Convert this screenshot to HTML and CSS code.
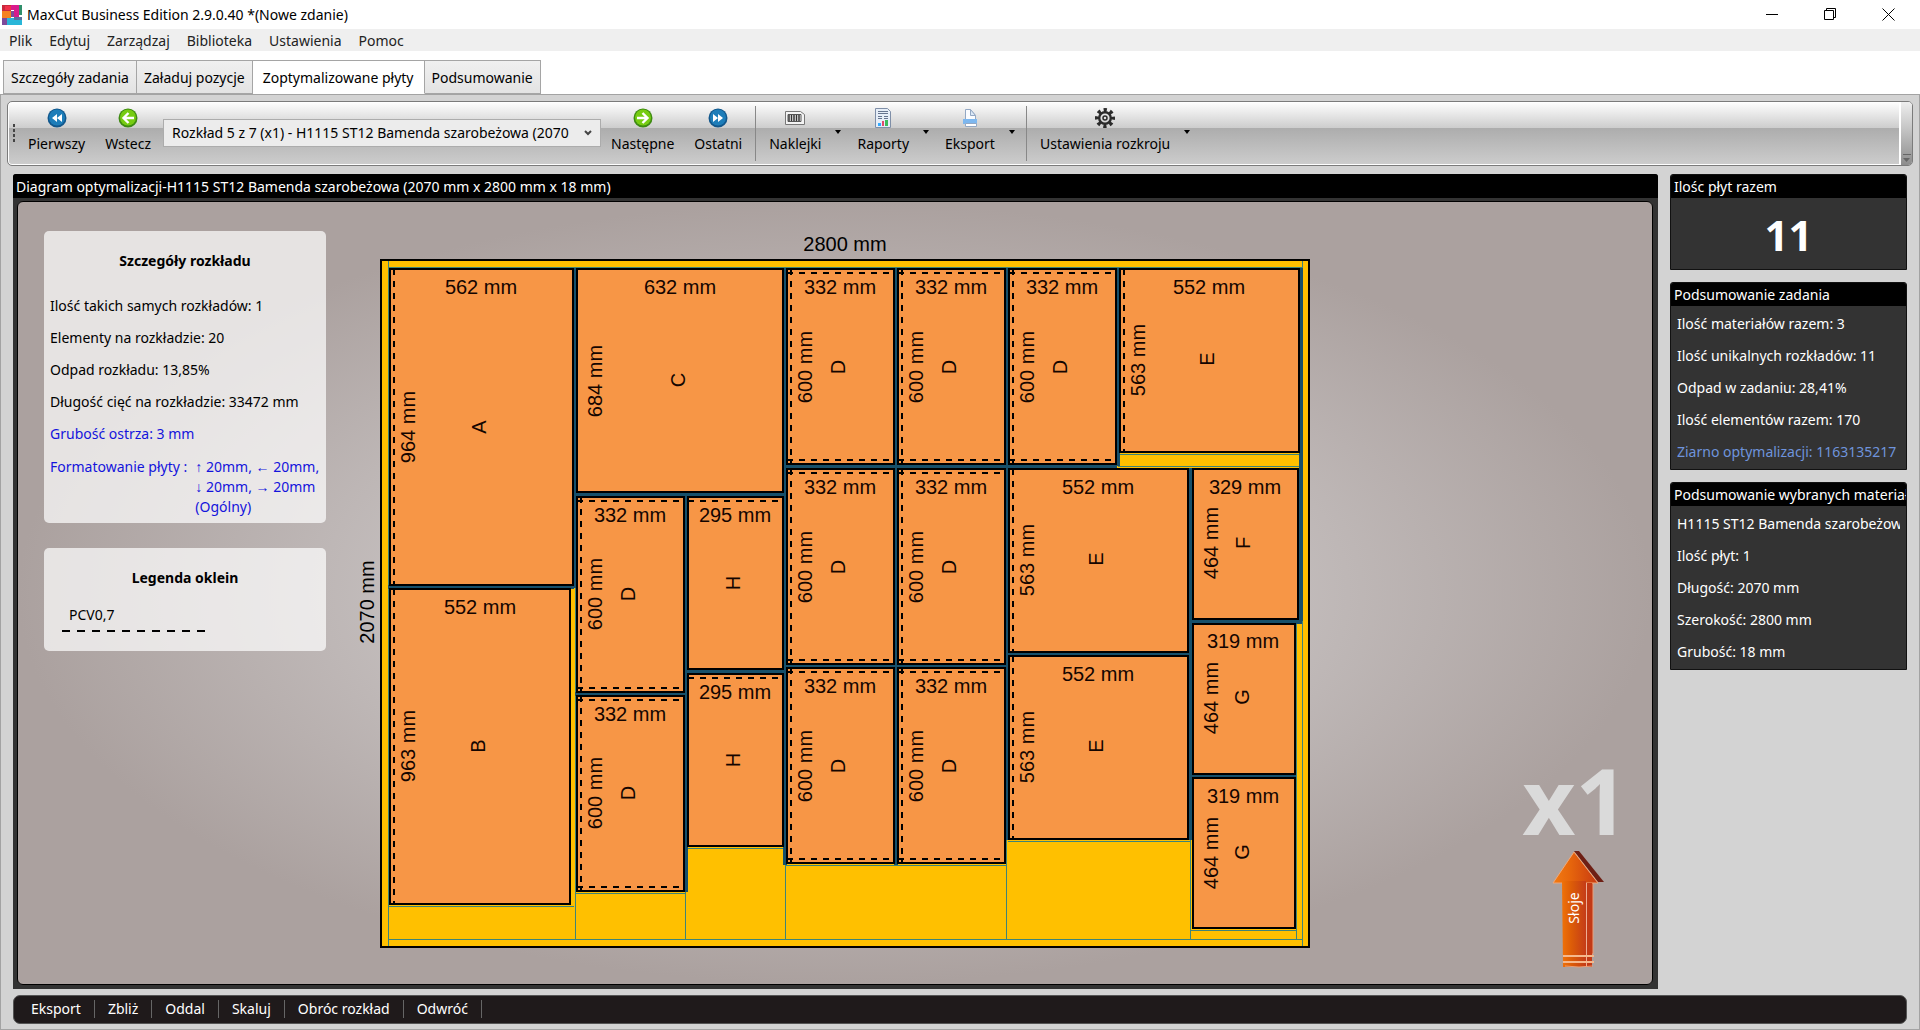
FILE: index.html
```html
<!DOCTYPE html>
<html lang="pl">
<head>
<meta charset="utf-8">
<title>MaxCut Business Edition 2.9.0.40 *(Nowe zdanie)</title>
<link rel="stylesheet" href="styles.css">
</head>
<body>
<header class="titlebar">
  <svg class="app-logo" viewBox="0 0 20 20" aria-hidden="true">
    <path fill="#c8283c" d="M0 0h9v6H0z"/><path fill="#f0304a" d="M3 1h6v4H3z"/><path fill="#d81b8c" d="M9 0h8v12h-5V5H9z"/>
    <path fill="#2f8f6b" d="M17 0h3v10h-3z"/><path fill="#f58220" d="M0 6h9v7H5v7H0z"/><path fill="#7d4a9a" d="M9 6h3v6H9zM0 13h5v7H0z"/>
    <path fill="#5b6f9e" d="M12 12h8v3h-8z"/><path fill="#29b6d8" d="M5 13h7v2h8v5H5z"/>
  </svg>
  <h1 class="title">MaxCut Business Edition 2.9.0.40 *(Nowe zdanie)</h1>
  <div class="window-buttons">
    <button type="button" aria-label="Minimalizuj"><svg viewBox="0 0 13 13"><path d="M0 6.500h12"/></svg></button>
    <button type="button" aria-label="Przywróć"><svg viewBox="0 0 13 13"><path d="M.5 2.500h9v9h-9zM2.500 2.500v-2h9v9h-2"/></svg></button>
    <button type="button" aria-label="Zamknij"><svg viewBox="0 0 13 13"><path d="M.5.5l12 12M12.500.5l-12 12"/></svg></button>
  </div>
</header>
<nav class="menu">
  <button type="button">Plik</button><button type="button">Edytuj</button><button type="button">Zarządzaj</button><button type="button">Biblioteka</button><button type="button">Ustawienia</button><button type="button">Pomoc</button>
</nav>
<nav class="tabs">
  <button type="button">Szczegóły zadania</button><button type="button">Załaduj pozycje</button><button type="button" class="active">Zoptymalizowane płyty</button><button type="button">Podsumowanie</button>
</nav>
<main class="page">
  <div class="toolbar">
    <span class="grip"></span>
    <button type="button" class="tool">
      <svg viewBox="0 0 20 20"><circle cx="10" cy="10" r="9.500" fill="#12578c"/><circle cx="10" cy="9.500" r="8" fill="#1d7db9"/><path fill="#fff" d="M10 6v8l-5-4zM15 6v8l-5-4z"/></svg>
      <span>Pierwszy</span></button>
    <button type="button" class="tool">
      <svg viewBox="0 0 20 20"><circle cx="10" cy="10" r="9.500" fill="#3d8a12"/><circle cx="10" cy="9.500" r="8" fill="#76cc12"/><path fill="none" stroke="#fff" stroke-width="2.400" d="M16 10H6M10.500 5L5.500 10l5 5"/></svg>
      <span>Wstecz</span></button>
    <select class="layout-select" aria-label="Rozkład"><option>Rozkład 5 z 7 (x1) - H1115 ST12 Bamenda szarobeżowa (2070 mm x 2800 mm x 18 mm)</option></select>
    <button type="button" class="tool">
      <svg viewBox="0 0 20 20"><circle cx="10" cy="10" r="9.500" fill="#3d8a12"/><circle cx="10" cy="9.500" r="8" fill="#76cc12"/><path fill="none" stroke="#fff" stroke-width="2.400" d="M4 10h10M9.500 5l5 5-5 5"/></svg>
      <span>Następne</span></button>
    <button type="button" class="tool">
      <svg viewBox="0 0 20 20"><circle cx="10" cy="10" r="9.500" fill="#12578c"/><circle cx="10" cy="9.500" r="8" fill="#1d7db9"/><path fill="#fff" d="M10 6v8l5-4zM5 6v8l5-4z"/></svg>
      <span>Ostatni</span></button>
    <span class="divider"></span>
    <button type="button" class="tool drop">
      <svg viewBox="0 0 20 20"><path fill="#f4f4f4" stroke="#777" d="M.5 3.500h15l4 3v10H.5z"/><path stroke="#333" stroke-width="1.500" d="M4 6v8M6.500 6v8M9 6v8M11.500 6v8M14 6v8"/><path stroke="#555" d="M3 6.500h13v7H3z" fill="none"/></svg>
      <span>Naklejki</span></button>
    <button type="button" class="tool drop">
      <svg viewBox="0 0 20 20"><path fill="#e6eef8" stroke="#7f8fa8" d="M2.500.5h12l3 3v16h-15z"/><path fill="none" stroke="#66758f" d="M5 3.500h10M5 5.500h10M5 8.500h4M5 10.500h4M11 8.500h4M11 10.500h4"/><path fill="#32aaff" d="M5 15h3v3H5z"/><path fill="#e24a6c" d="M9 13h2v5H9z"/><path fill="#3dbb5c" d="M12 12h3v6h-3z"/></svg>
      <span>Raporty</span></button>
    <button type="button" class="tool drop">
      <svg viewBox="0 0 20 20"><path fill="#fafcff" stroke="#93a8c4" d="M5.500 12V1.500h5l5 6V12"/><path fill="#dbe8f6" stroke="#93a8c4" d="M10.500 1.500v6h5z"/><path fill="#7db7ef" d="M3 11h14v5H3z"/><path fill="#fff" stroke="#93a8c4" d="M5.500 15.500h11v3h-11z"/></svg>
      <span>Eksport</span></button>
    <span class="divider"></span>
    <button type="button" class="tool drop">
      <svg viewBox="0 0 20 20"><circle cx="10" cy="10" r="8" fill="none" stroke="#2b2b2b" stroke-width="4" stroke-dasharray="3.140 3.140" stroke-dashoffset="1.570"/><circle cx="10" cy="10" r="5.800" fill="none" stroke="#2b2b2b" stroke-width="2.400"/><circle cx="10" cy="10" r="2" fill="none" stroke="#2b2b2b" stroke-width="1.500"/></svg>
      <span>Ustawienia rozkroju</span></button>
    <button type="button" class="overflow" aria-label="Więcej"><svg viewBox="0 0 8 8"><path stroke="#666" d="M0 .5h8"/><path fill="#666" d="M0 4h7L3.500 8z"/></svg></button>
  </div>

  <div class="workspace">
    <section class="diagram-panel">
      <h2 class="panel-head">Diagram optymalizacji-H1115 ST12 Bamenda szarobeżowa (2070 mm x 2800 mm x 18 mm)</h2>
      <div class="canvas">
        <div class="cards">
          <section class="card details">
            <h3>Szczegóły rozkładu</h3>
            <p>Ilość takich samych rozkładów: 1</p>
            <p>Elementy na rozkładzie: 20</p>
            <p>Odpad rozkładu: 13,85%</p>
            <p>Długość cięć na rozkładzie: 33472 mm</p>
            <p class="blue">Grubość ostrza: 3 mm</p>
            <p class="blue trim"><span>Formatowanie płyty :</span><span>↑ 20mm, ← 20mm,<br>↓ 20mm, → 20mm<br>(Ogólny)</span></p>
          </section>
          <section class="card legend">
            <h3>Legenda oklein</h3>
            <p>PCV0,7</p>
            <svg class="legend-line" viewBox="0 0 145 2"><path d="M0 1h145"/></svg>
          </section>
        </div>

        <svg class="board" viewBox="0 0 962 720" role="img" aria-label="Rozkład płyty 2800 x 2070 mm">
          <text x="495" y="21">2800 mm</text>
          <text transform="translate(24 372) rotate(-90)">2070 mm</text>
          <rect class="sheet" x="31" y="30" width="928" height="687"/>
          <path class="cut" d="M38.500 31v685M952.500 31v685M38 37.500h914M38 709.500h914M225.500 37v672M335.500 264v445M435.500 37v672M656.500 37v672M840.500 238v471M946.500 391v318M38 676.500h186M225 663.500h110M336 618.500h99M436 635.500h220M658 611.500h182M768 224.500h184M768 236.500h184M841 700.500h106"/>
          <path class="kerf" d="M225 38v320M336 265v397M435 38v597M546 38v597M657 38v572M768 38v198M841 238v372M951 38v353M38 357h186M225 264h210M225 464h110M336 442h99M436 236h331M436 436h220M658 424h182M841 392h111M841 546h105"/>

          <g class="part"><rect x="40" y="39" width="183" height="316"/><path d="M44 39v316"/><text x="131" y="64">562 mm</text><text transform="translate(65 197) rotate(-90)">964 mm</text><text transform="translate(136 197) rotate(-90)">A</text></g>
          <g class="part"><rect x="40" y="359" width="180" height="315"/><path d="M44 359v315"/><text x="130" y="384">552 mm</text><text transform="translate(65 516) rotate(-90)">963 mm</text><text transform="translate(135 516) rotate(-90)">B</text></g>
          <g class="part"><rect x="227" y="39" width="206" height="223"/><text x="330" y="64">632 mm</text><text transform="translate(252 151) rotate(-90)">684 mm</text><text transform="translate(335 150) rotate(-90)">C</text></g>

          <g class="part"><rect x="227" y="267" width="107" height="195"/><path d="M231 267v195M227 271h107M227 458h107"/><text x="280" y="292">332 mm</text><text transform="translate(252 364) rotate(-90)">600 mm</text><text transform="translate(285 364) rotate(-90)">D</text></g>
          <g class="part"><rect x="227" y="466" width="107" height="195"/><path d="M231 466v195M227 470h107M227 657h107"/><text x="280" y="491">332 mm</text><text transform="translate(252 563) rotate(-90)">600 mm</text><text transform="translate(285 563) rotate(-90)">D</text></g>
          <g class="part"><rect x="338" y="267" width="95" height="172"/><path d="M338 271h95"/><text x="385" y="292">295 mm</text><text transform="translate(390 353) rotate(-90)">H</text></g>
          <g class="part"><rect x="338" y="444" width="95" height="172"/><path d="M338 448h95"/><text x="385" y="469">295 mm</text><text transform="translate(390 530) rotate(-90)">H</text></g>

          <g class="part"><rect x="437" y="39" width="107" height="195"/><path d="M441 39v195M437 43h107M437 230h107"/><text x="490" y="64">332 mm</text><text transform="translate(462 137) rotate(-90)">600 mm</text><text transform="translate(495 137) rotate(-90)">D</text></g>
          <g class="part"><rect x="437" y="239" width="107" height="195"/><path d="M441 239v195M437 243h107M437 430h107"/><text x="490" y="264">332 mm</text><text transform="translate(462 337) rotate(-90)">600 mm</text><text transform="translate(495 337) rotate(-90)">D</text></g>
          <g class="part"><rect x="437" y="438" width="107" height="195"/><path d="M441 438v195M437 442h107M437 629h107"/><text x="490" y="463">332 mm</text><text transform="translate(462 536) rotate(-90)">600 mm</text><text transform="translate(495 536) rotate(-90)">D</text></g>

          <g class="part"><rect x="548" y="39" width="107" height="195"/><path d="M552 39v195M548 43h107M548 230h107"/><text x="601" y="64">332 mm</text><text transform="translate(573 137) rotate(-90)">600 mm</text><text transform="translate(606 137) rotate(-90)">D</text></g>
          <g class="part"><rect x="548" y="239" width="107" height="195"/><path d="M552 239v195M548 243h107M548 430h107"/><text x="601" y="264">332 mm</text><text transform="translate(573 337) rotate(-90)">600 mm</text><text transform="translate(606 337) rotate(-90)">D</text></g>
          <g class="part"><rect x="548" y="438" width="107" height="195"/><path d="M552 438v195M548 442h107M548 629h107"/><text x="601" y="463">332 mm</text><text transform="translate(573 536) rotate(-90)">600 mm</text><text transform="translate(606 536) rotate(-90)">D</text></g>

          <g class="part"><rect x="659" y="39" width="107" height="195"/><path d="M663 39v195M659 43h107M659 230h107"/><text x="712" y="64">332 mm</text><text transform="translate(684 137) rotate(-90)">600 mm</text><text transform="translate(717 137) rotate(-90)">D</text></g>
          <g class="part"><rect x="659" y="239" width="179" height="183"/><path d="M663 239v183"/><text x="748" y="264">552 mm</text><text transform="translate(684 330) rotate(-90)">563 mm</text><text transform="translate(753 329) rotate(-90)">E</text></g>
          <g class="part"><rect x="659" y="426" width="179" height="183"/><path d="M663 426v183"/><text x="748" y="451">552 mm</text><text transform="translate(684 517) rotate(-90)">563 mm</text><text transform="translate(753 516) rotate(-90)">E</text></g>
          <g class="part"><rect x="770" y="39" width="179" height="183"/><path d="M774 39v183"/><text x="859" y="64">552 mm</text><text transform="translate(795 130) rotate(-90)">563 mm</text><text transform="translate(864 129) rotate(-90)">E</text></g>

          <g class="part"><rect x="843" y="239" width="105" height="150"/><text x="895" y="264">329 mm</text><text transform="translate(868 313) rotate(-90)">464 mm</text><text transform="translate(900 313) rotate(-90)">F</text></g>
          <g class="part"><rect x="843" y="394" width="102" height="150"/><text x="893" y="418">319 mm</text><text transform="translate(868 468) rotate(-90)">464 mm</text><text transform="translate(899 467) rotate(-90)">G</text></g>
          <g class="part"><rect x="843" y="548" width="102" height="150"/><text x="893" y="573">319 mm</text><text transform="translate(868 623) rotate(-90)">464 mm</text><text transform="translate(899 622) rotate(-90)">G</text></g>
        </svg>

        <div class="stamp">
          <strong>x1</strong>
          <svg class="grain" viewBox="0 0 52 118">
            <defs>
              <linearGradient id="front"><stop offset="0" stop-color="#f27a12"/><stop offset=".35" stop-color="#e8680c"/><stop offset="1" stop-color="#c83a12"/></linearGradient>
              <linearGradient id="shaft"><stop offset="0" stop-color="#f07208"/><stop offset=".4" stop-color="#dc5c08"/><stop offset="1" stop-color="#c43c18"/></linearGradient>
            </defs>
            <path fill="#6e1f14" d="M22 1h5l25 31h-6z"/>
            <path fill="#c23a16" stroke="#e9a07c" d="M34 32h7v72h-7z"/>
            <path fill="url(#front)" stroke="#f0a878" d="M22 2l24 31H1z"/>
            <path fill="url(#shaft)" d="M10 31h24v86H11z"/>
            <path fill="#c23a16" d="M35 33h5v84h-6z"/>
            <path fill="none" stroke="#eeae94" d="M34.500 33v84"/>
            <path fill="none" stroke="#f6b88c" stroke-width="2" d="M11 106h31M11 112h31"/>
            <path fill="none" stroke="#e8a07a" d="M13 116q14 2 28 0"/>
            <text transform="translate(27 58) rotate(-90)">Słoje</text>
          </svg>
        </div>
      </div>
    </section>

    <aside class="summary">
      <section class="box total">
        <h2 class="panel-head">Ilośc płyt razem</h2>
        <div class="box-body"><strong>11</strong></div>
      </section>
      <section class="box">
        <h2 class="panel-head">Podsumowanie zadania</h2>
        <div class="box-body">
          <p>Ilość materiałów razem: 3</p>
          <p>Ilość unikalnych rozkładów: 11</p>
          <p>Odpad w zadaniu: 28,41%</p>
          <p>Ilość elementów razem: 170</p>
          <p class="seed">Ziarno optymalizacji: 1163135217</p>
        </div>
      </section>
      <section class="box">
        <h2 class="panel-head">Podsumowanie wybranych materiałów</h2>
        <div class="box-body">
          <p>H1115 ST12 Bamenda szarobeżowa</p>
          <p>Ilość płyt: 1</p>
          <p>Długość: 2070 mm</p>
          <p>Szerokość: 2800 mm</p>
          <p>Grubość: 18 mm</p>
        </div>
      </section>
    </aside>
  </div>

  <footer class="actions">
    <button type="button">Eksport</button><button type="button">Zbliż</button><button type="button">Oddal</button><button type="button">Skaluj</button><button type="button">Obróc rozkład</button><button type="button">Odwróć</button>
  </footer>
</main>
</body>
</html>
```
FILE: styles.css
```css
* { box-sizing: border-box; }

body {
  margin: 0;
  min-height: 100vh;
  display: flex;
  flex-direction: column;
  background: #fff;
  color: #000;
  font: 14px/20px "Noto Sans", "Open Sans", sans-serif;
}

h1, h2, h3, p { margin: 0; font-size: inherit; font-weight: 400; }
button, select { font: inherit; color: inherit; background: none; border: 0; padding: 0; margin: 0; white-space: nowrap; }

/* window frame */
.titlebar { display: flex; align-items: center; height: 29px; padding-left: 2px; }
.app-logo { width: 20px; height: 20px; margin-right: 5px; }
.window-buttons { display: flex; margin-left: auto; padding-right: 3px; }
.window-buttons button { display: flex; justify-content: center; width: 58px; }
.window-buttons svg { width: 13px; height: 13px; fill: none; stroke: #000; }

.menu { display: flex; gap: 17px; padding: 1px 9px 0; height: 22px; background: #efefef; color: #222; }

.tabs { display: flex; align-items: flex-end; height: 43px; padding-left: 3px; }
.tabs button { height: 34px; padding: 1px 7px 0; border: 1px solid #a5a5a5; border-left-width: 0; background: linear-gradient(#f0f0f0, #e3e3e3); }
.tabs button:first-child { border-left-width: 1px; }
.tabs .active { padding: 1px 10px 0; background: #fff; border-bottom-color: #fff; }

.page { flex: 1; display: flex; flex-direction: column; padding: 6px 12px 5px; background: #d3d3d3; border: 1px solid #a3a3a3; }

/* toolbar */
.toolbar {
  display: flex;
  align-items: stretch;
  height: 65px;
  margin: 0 -6px 8px;
  border: 1px solid #7b7b7b;
  border-radius: 5px;
  background: linear-gradient(#fff, #ccc 42%, #adadad 42%, #cdcdcd);
  box-shadow: inset 0 0 0 1px #fff;
  overflow: hidden;
}
.grip { width: 2px; height: 18px; margin: 22px 6px 0 5px; background: repeating-linear-gradient(#444 0 3px, transparent 3px 5px); }
.tool { display: flex; flex-direction: column; align-items: center; gap: 6px; padding: 6px 10px 0; }
.tool:first-of-type { padding-left: 7px; }
.tool svg { width: 20px; height: 20px; }
.drop { position: relative; padding: 6px 28px 0 8px; }
.drop::after { content: ""; position: absolute; right: 8px; top: 28px; border: 3px solid transparent; border-top: 4px solid #000; border-bottom: 0; }
.divider { width: 1px; margin: 4px 5px 4px 3px; background: #888; }
.layout-select {
  appearance: none;
  flex: 0 1 438px;
  min-width: 0;
  width: 438px;
  height: 28px;
  margin: 17px 0 0 2px;
  padding: 0 29px 0 8px;
  border: 1px solid #acacac;
  background: #ececec url("data:image/svg+xml,%3Csvg xmlns='http://www.w3.org/2000/svg' width='8' height='6'%3E%3Cpath d='M1 1l3 3 3-3' fill='none' stroke='%23444' stroke-width='2'/%3E%3C/svg%3E") no-repeat right 8px center;
}
.overflow { display: flex; align-items: flex-end; justify-content: center; width: 13px; margin-left: auto; padding-bottom: 3px; border-left: 2px solid #fff; background: linear-gradient(#eee, #8d8d8d); }
.overflow svg { width: 8px; height: 8px; }

/* workspace */
.workspace { flex: 1; display: flex; gap: 12px; }
.panel-head {
  height: 24px;
  padding: 0 3px;
  line-height: 25px;
  background: #000;
  color: #fff;
  border-radius: 3px 3px 0 0;
  overflow: hidden;
  white-space: nowrap;
}
.diagram-panel { flex: 1; min-width: 0; display: flex; flex-direction: column; padding: 0 5px 4px 4px; background: #333; border-radius: 3px 3px 0 0; }
.diagram-panel .panel-head { margin: 0 -5px 3px -4px; }
.canvas {
  flex: 1;
  display: flex;
  align-items: flex-start;
  gap: 24px;
  padding: 28px 24px 0 26px;
  border: 1px solid #000;
  border-radius: 6px;
  background: radial-gradient(closest-side, #dedcdd, #aba19f) #aba19f;
}
.cards { flex: 0 0 282px; min-width: 0; display: flex; flex-direction: column; gap: 25px; padding-top: 1px; }
.card { background: rgba(255, 255, 255, .7); border-radius: 5px; padding: 20px 6px 0; }
.card h3 { font-weight: 700; text-align: center; }
.details { height: 292px; }
.details h3 { margin-bottom: 25px; }
.details p { margin-bottom: 12px; white-space: nowrap; }
.details .blue { margin-bottom: 13px; }
.blue { color: #1414dc; }
.trim { display: flex; gap: 8px; }
.legend { height: 103px; }
.legend p { margin: 17px 0 5px 19px; }
.legend-line { display: block; width: 145px; height: 2px; margin-left: 12px; stroke: #000; stroke-width: 2; stroke-dasharray: 8 7; }

.board { flex: 0 1 962px; min-width: 0; height: auto; font: 20px "Liberation Sans", Arial, sans-serif; text-anchor: middle; }
.sheet { fill: #ffc000; stroke: #000; stroke-width: 2; }
.cut { fill: none; stroke: #3f8478; stroke-width: 1; }
.kerf { fill: none; stroke: #17506a; stroke-width: 4; }
.part rect { fill: #f79646; stroke: #000; stroke-width: 2; }
.part path { fill: none; stroke: #000; stroke-width: 2; stroke-dasharray: 6 6; }
.part text { fill: #140500; }

.stamp { align-self: flex-end; display: flex; flex-direction: column; align-items: center; margin: 0 0 16px auto; }
.stamp strong { font: 700 92px/100px "Open Sans", "Noto Sans", sans-serif; color: #dadada; }
.grain { width: 52px; height: 118px; margin-left: 6px; }
.grain text { fill: #fff; text-anchor: middle; }

/* summary column */
.summary { flex: 0 0 237px; min-width: 0; display: flex; flex-direction: column; gap: 12px; }
.box { background: #333; border: 1px solid #111; border-radius: 3px 3px 0 0; color: #fff; }
.box .panel-head { height: 23px; line-height: 23px; }
.box-body { height: 163px; padding: 8px 6px 0; }
.box-body p { margin-bottom: 12px; overflow: hidden; white-space: nowrap; }
.total .box-body { height: 71px; padding: 2px 0 0; display: flex; align-items: center; justify-content: center; }
.total strong { font-size: 42px; font-weight: 700; }
.seed { color: #6f93dc; }

.actions { display: flex; align-items: center; height: 29px; margin-top: 6px; padding: 0 0 2px 4px; background: #1f1a1b; border: 1px solid #555; border-radius: 7px; color: #fff; }
.actions button { height: 18px; line-height: 18px; padding: 0 13px; border-right: 1px solid #666; }
```
